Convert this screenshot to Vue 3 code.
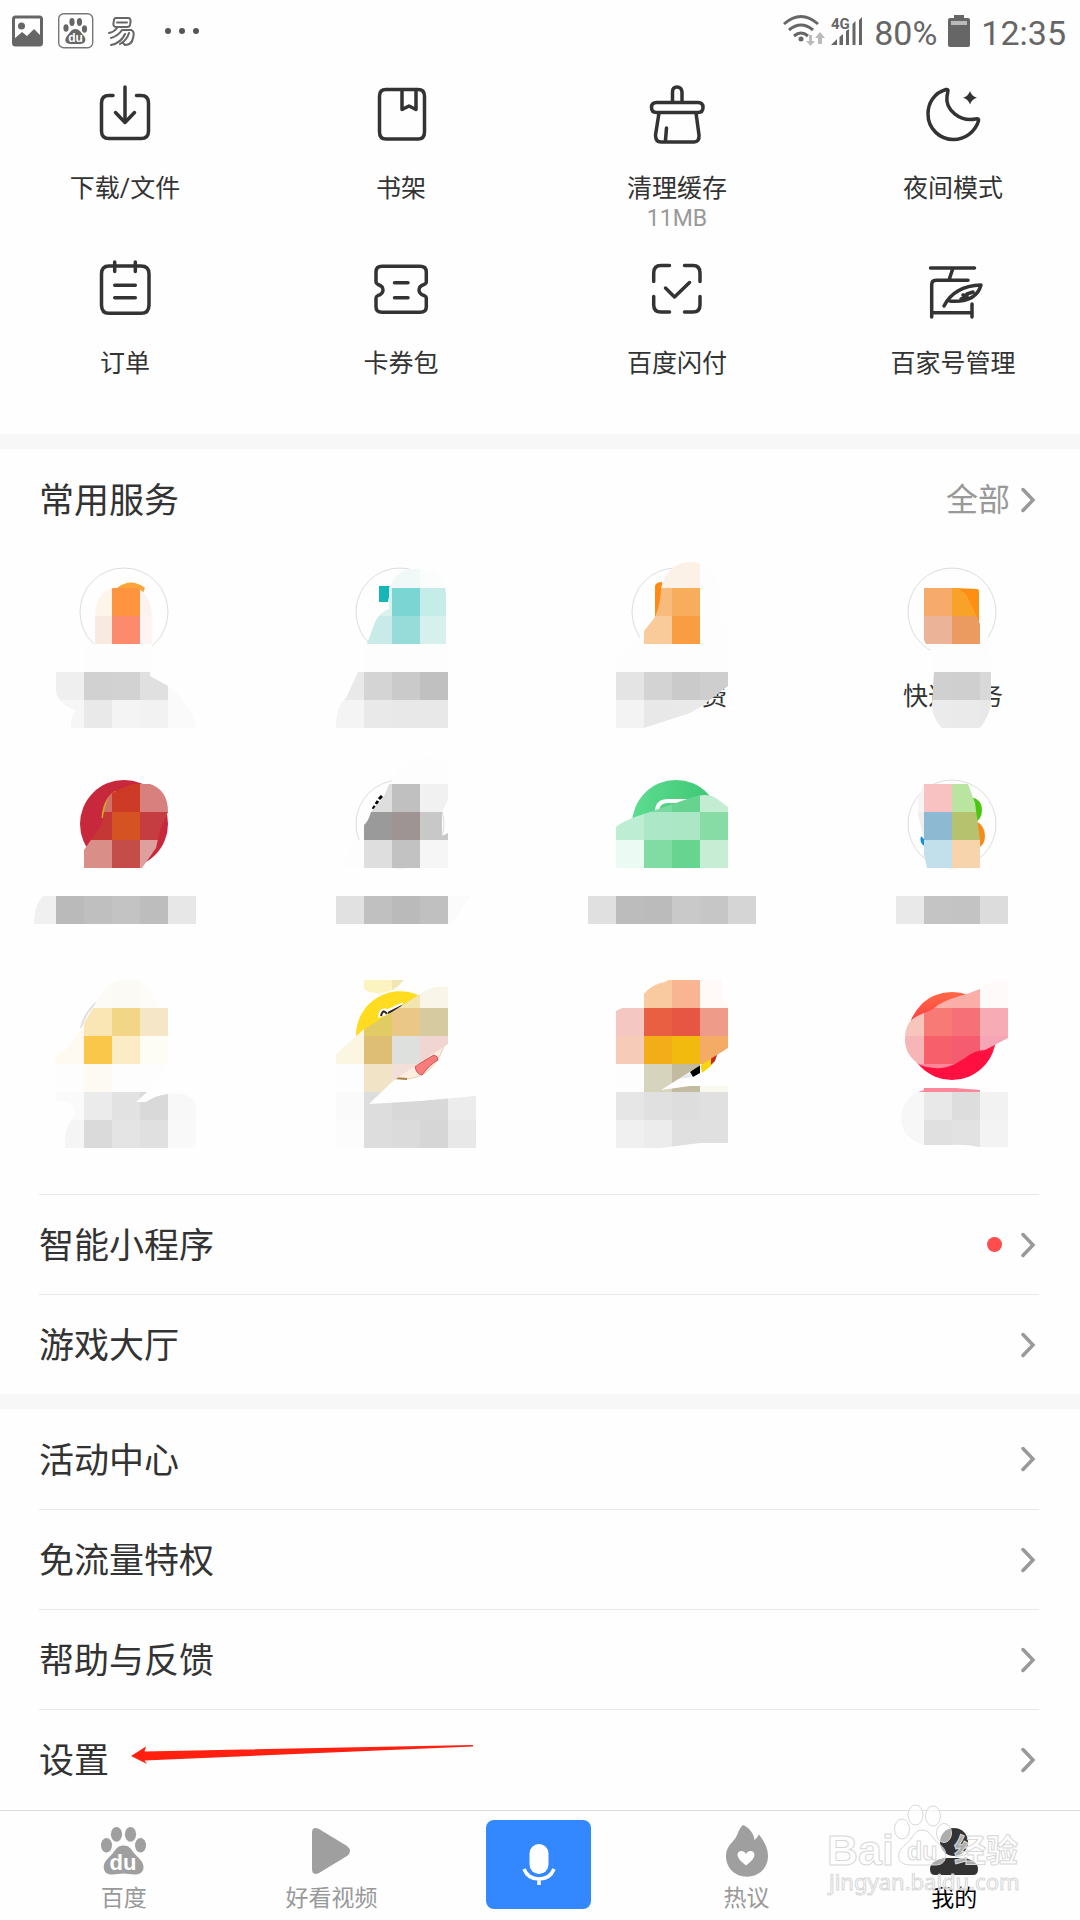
<template>
  <div class="page">
    <header class="status-bar">
      <div class="status-left">
        <svg width="32" height="32" viewBox="0 0 32 32">
          <rect x="1.500" y="2" width="28" height="28" rx="2" fill="none" stroke="#666" stroke-width="3" />
          <circle cx="9.500" cy="11" r="3.500" fill="#666" />
          <path d="M2 24L10 17L15 21L22 14L30 22V30H2Z" fill="#666" />
        </svg>
        <svg width="36" height="36" viewBox="0 0 36 36">
          <rect x="0.700" y="0.700" width="34" height="34" rx="5" fill="none" stroke="#777" stroke-width="1.400" />
          <g fill="#666">
            <ellipse cx="8" cy="15" rx="2.600" ry="3.800" />
            <ellipse cx="14" cy="9" rx="2.600" ry="4" />
            <ellipse cx="21.500" cy="9" rx="2.600" ry="4" />
            <ellipse cx="26.500" cy="16" rx="2.600" ry="3.800" />
            <path d="M17.500 16C22 16 23 20 26 23C29 27 27 31 22 31H13C7 31 6 27 9 23C12 20 13 16 17.500 16Z" />
          </g>
          <text x="17.500" y="29" class="du-text" font-size="12">du</text>
        </svg>
        <svg width="28" height="32" viewBox="0 0 28 32" class="line-icon status-line">
          <path d="M8 3H20Q23 3 22.500 7L22 10Q21.500 12 19 12H8Q5 12 5.500 8L6 5Q6.300 3 8 3ZM9 7.500H19M1 18Q6 17 9 13M3 23Q10 21 14 15H23Q27 16 25 23Q24 30 17 30L15 28M3 30Q13 28 17 19M12 29Q19 25 21 18" />
        </svg>
        <svg class="more" width="36" height="8" viewBox="0 0 36 8" fill="#555">
          <circle cx="4" cy="4" r="3" />
          <circle cx="18" cy="4" r="3" />
          <circle cx="32" cy="4" r="3" />
        </svg>
      </div>
      <div class="status-right">
        <div class="network">
          <svg width="44" height="34" viewBox="0 0 44 34">
            <g fill="none" stroke="#666" stroke-width="3">
              <path d="M1 10Q18 -5 35 10M6 16Q18 6 30 16M11 22Q18 16 25 22" />
            </g>
            <circle cx="18" cy="25" r="2.500" fill="#666" />
            <path d="M26 21H29V27H32L27.500 32L23 27H26ZM35 30V24H32L37 18L42 24H39V30Z" fill="#bbb" />
          </svg>
          <svg width="32" height="34" viewBox="0 0 32 34">
            <text x="0" y="15" class="net-text">4G</text>
            <path d="M0 31L6 25V31ZM8.500 31V23L12 20V31ZM15 31V17L18 15V31ZM21.500 31V10L24.500 7V31ZM28 31V6L31 3V31Z" fill="#666" />
          </svg>
        </div>
        <span class="status-text">80%</span>
        <svg width="22" height="32" viewBox="0 0 22 32">
          <path d="M6 0H16V3H20Q22 3 22 5V30Q22 32 20 32H2Q0 32 0 30V5Q0 3 2 3H6Z" fill="#666" />
          <rect x="3" y="6" width="16" height="4" fill="#bbb" />
        </svg>
        <span class="status-text">12:35</span>
      </div>
    </header>

    <main>
      <section class="tools">
        <button v-for="t in tools" :key="t.name" class="tool">
          <svg width="60" height="60" viewBox="0 0 60 60" class="line-icon">
            <path :d="t.icon" />
            <path v-if="t.solid" :d="t.solid" class="solid" />
          </svg>
          <span class="tool-name">{{ t.name }}</span>
          <span v-if="t.note" class="tool-note">{{ t.note }}</span>
        </button>
      </section>

      <section class="block services">
        <div class="block-head">
          <h2>常用服务</h2>
          <a href="#" class="all">
            全部
            <svg class="chevron" width="18" height="26" viewBox="0 0 18 26"><path d="M2 2.500L12 13L2 23.500" /></svg>
          </a>
        </div>
        <div class="service-grid">
          <button v-for="(s, i) in services" :key="i" class="service" :aria-label="'服务 ' + (i + 1)">
            <svg width="170" height="212" :viewBox="viewBox(i)">
              <defs>
                <clipPath :id="'mask' + i"><path :d="s.mask" /></clipPath>
                <linearGradient id="warm" x1="0" y1="0" x2="0" y2="1">
                  <stop offset="0" stop-color="#ff6a45" />
                  <stop offset="0.700" stop-color="#ff1040" />
                </linearGradient>
                <linearGradient id="mint" x1="0" y1="0" x2="1" y2="0">
                  <stop offset="0" stop-color="#5ddc90" />
                  <stop offset="1" stop-color="#3bc672" />
                </linearGradient>
              </defs>
              <circle
                v-if="!s.noRing"
                :cx="124 + 276 * (i % 4)"
                :cy="612 + 212 * Math.floor(i / 4)"
                r="44"
                :fill="s.bg || 'none'"
                :stroke="s.bg ? 'none' : '#ddd'"
              />
              <path v-for="(a, k) in s.art" :key="k" :d="a.d" :fill="a.fill || 'none'" :stroke="a.line || 'none'" :stroke-width="a.w || 1" />
              <text v-if="s.label" :x="s.labelX" :y="705" class="service-label">{{ s.label }}</text>
              <g :clip-path="'url(#mask' + i + ')'" shape-rendering="crispEdges">
                <template v-for="(row, r) in s.tiles" :key="r">
                  <rect
                    v-for="(c, k) in row[2].split(' ')"
                    :key="k"
                    :x="row[0] + k * 28"
                    :y="row[1]"
                    width="28"
                    height="28"
                    :fill="'#' + c"
                  />
                </template>
              </g>
            </svg>
          </button>
        </div>
        <nav class="list first-lined">
          <a href="#" class="row">
            <span class="row-name">智能小程序</span>
            <i class="dot"></i>
            <svg class="chevron" width="18" height="26" viewBox="0 0 18 26"><path d="M2 2.500L12 13L2 23.500" /></svg>
          </a>
          <a href="#" class="row">
            <span class="row-name">游戏大厅</span>
            <svg class="chevron" width="18" height="26" viewBox="0 0 18 26"><path d="M2 2.500L12 13L2 23.500" /></svg>
          </a>
        </nav>
      </section>

      <section class="block">
        <nav class="list">
          <a v-for="name in menus" :key="name" href="#" class="row">
            <span class="row-name">{{ name }}</span>
            <svg v-if="name === '设置'" class="pointer" width="344" height="30" viewBox="0 0 344 30">
              <path d="M0 11L15 1.500L13.500 6.500L342 0V1.500L13.500 15.500L16 19Z" fill="#ff2010" />
            </svg>
            <svg class="chevron" width="18" height="26" viewBox="0 0 18 26"><path d="M2 2.500L12 13L2 23.500" /></svg>
          </a>
        </nav>
      </section>
    </main>

    <footer class="tab-bar">
      <button class="tab">
        <svg width="56" height="56" viewBox="0 0 56 56" fill="#9f9f9f">
          <ellipse cx="10.500" cy="21.300" rx="5.500" ry="7.200" />
          <ellipse cx="20.500" cy="10.300" rx="5.600" ry="7.400" />
          <ellipse cx="34.500" cy="10.300" rx="5.600" ry="7.400" />
          <ellipse cx="44.500" cy="21.300" rx="5.500" ry="7.200" />
          <path d="M27.500 21.500C33 21.500 35 25 38 29C42 34 47.500 37 47.500 43C47.500 48 44 50.500 39 50.500C34 50.500 32 49.500 27.500 49.500C23 49.500 21 50.500 16 50.500C11 50.500 7.700 48 7.700 43C7.700 37 13 34 17 29C20 25 22 21.500 27.500 21.500Z" />
          <text x="27" y="46" class="du-text" font-size="22">du</text>
        </svg>
        <span>百度</span>
      </button>
      <button class="tab">
        <svg width="56" height="56" viewBox="0 0 56 56" fill="#9f9f9f">
          <path d="M9 9Q9 2 16 5L44 22Q50 27 44 32L16 49Q9 52 9 45Z" />
        </svg>
        <span>好看视频</span>
      </button>
      <button class="voice" aria-label="语音">
        <svg width="40" height="48" viewBox="0 0 40 48">
          <rect x="10.500" y="3" width="19" height="30" rx="9.500" fill="#fff" />
          <path d="M5 28Q9 38 20 38T35 28M20 38V44" fill="none" stroke="#fff" stroke-width="3.500" />
        </svg>
      </button>
      <button class="tab">
        <svg width="56" height="56" viewBox="0 0 56 56">
          <path d="M24 1C31 4 35 10 35.500 16Q38 14 40 10.500C44 16 49 23 49 32C49 44 40 52.700 28 52.700C16 52.700 7 44 7 32C7 23 13 19 16.500 14C19 10 20 4 24 1Z" fill="#9f9f9f" />
          <path d="M27 41.500Q18.500 35 18.500 31C18.500 26 25 26 27 30C29 26 35.500 26 35.500 31Q35.500 35 27 41.500Z" fill="#fff" />
        </svg>
        <span>热议</span>
      </button>
      <button class="tab active">
        <svg width="56" height="56" viewBox="0 0 56 56" fill="#333">
          <circle cx="28" cy="18" r="14" />
          <path d="M18 34H38Q52 37 52 45Q52 51 47 51H9Q4 51 4 45Q4 37 18 34Z" />
        </svg>
        <span>我的</span>
      </button>
      <svg class="watermark" width="200" height="96" viewBox="0 0 200 96">
        <g class="wm">
          <text x="1" y="63" class="wm-latin" font-size="43">Bai</text>
          <ellipse cx="76" cy="27" rx="7.500" ry="10" />
          <ellipse cx="89.500" cy="13" rx="7.500" ry="10" />
          <ellipse cx="107" cy="14" rx="7.500" ry="10" />
          <ellipse cx="118" cy="31" rx="7.500" ry="9.500" />
          <path d="M96 28C104 28 106 36 112 41C119 46 121 51 119 57C117 63 112 63 106 63H85C76 63 71 59 73 51C74 46 80 43 84 38C88 33 90 28 96 28Z" />
          <text x="81" y="58" class="wm-latin" font-size="25">du</text>
          <text x="128" y="60" class="wm-cjk" font-size="32">经验</text>
          <text x="3" y="88" class="wm-url" font-size="22">jingyan.baidu.com</text>
        </g>
      </svg>
    </footer>
  </div>
</template>

<script setup>
const tools = [
  {
    name: '下载/文件',
    icon: 'M18 11.500H14Q6.500 11.500 6.500 19V47Q6.500 54.500 14 54.500H46Q53.500 54.500 53.500 47V19Q53.500 11.500 46 11.500H41.500M30 3V38M20.500 28.500L30 38.500L39.500 28.500'
  },
  {
    name: '书架',
    icon: 'M15 5.500H47Q53.500 5.500 53.500 12V48Q53.500 55 47 55H15Q8.500 55 8.500 48V12Q8.500 5.500 15 5.500ZM31 6V25.500L38 22L45 25.500V6'
  },
  {
    name: '清理缓存',
    note: '11MB',
    icon: 'M25.500 18.500V8Q25.500 3 30 3T35 8V18.500M9.500 18.500H51Q56 18.500 56 23.500T51 28.500H9.500Q4.500 28.500 4.500 23.500T9.500 18.500ZM12 29L8.500 51Q8.500 58 14 58H47Q52.500 58 52 51L49 29M19.500 44L18.500 56'
  },
  {
    name: '夜间模式',
    icon: 'M23 5.500C11 9 5 19 5 30C5 45 17 55.500 30.500 55.500C42 55.500 52 48 55.500 37C56 35 55 34.500 52.500 35C37 38 22 26 24 12C25 7 26 5 23 5.500Z',
    solid: 'M47 7Q48.500 12 54 13.700Q48.500 15.500 47 20.500Q45.500 15.500 40 13.700Q45.500 12 47 7Z'
  },
  {
    name: '订单',
    icon: 'M14 7H46Q54 7 54 15V46Q54 54.300 46 54.300H14Q6.500 54.300 6.500 46V15Q6.500 7 14 7ZM19.700 3V12.500M40.300 3V12.500M19.700 26.300H40.300M19.700 38.700H40.300'
  },
  {
    name: '卡券包',
    icon: 'M11 7.300H49Q55.300 7.300 55.300 13V23Q55.300 24.500 53 25.500Q48 27 48 31T53 36.500Q55.300 37.500 55.300 39V48Q55.300 53.300 49 53.300H11Q5 53.300 5 48V39Q5 37.500 7 36.500Q12 35 12 31T7 25.500Q5 24.500 5 23V13Q5 7.300 11 7.300ZM23.500 23.700H37M23.500 38.700H37'
  },
  {
    name: '百度闪付',
    icon: 'M22.500 6.500H14Q6.700 6.500 6.700 14V22.500M37.500 6.500H46Q53 6.500 53 14V22.500M6.700 37.500V46Q6.700 53 14 53H22.500M53 37.500V46Q53 53 46 53H37.500M18.500 29L27.500 38L42.500 23.500'
  },
  {
    name: '百家号管理',
    icon: 'M7.500 9H51.500M30 9L26 21M45 21.300H13Q8.700 21.300 8.700 26V58M8.700 53.700H49V58M49 45V54M21 47Q31 27 58 26Q53 44 26.500 42M38 40L44 37L40 36M44 35L50 33'
  }
]

const menus = ['活动中心', '免流量特权', '帮助与反馈', '设置']

// tiles: [x, y, 每格颜色]
const services = [
  {
    art: [{ d: 'M117 588Q131 577 145 588L143 593L138 588Z', fill: '#fba43a' }],
    mask: 'M95 644V616Q96 592 113 588H138Q151 596 152 616V644L150 676L168 686Q178 692 183 702Q196 718 196 728H71Q71 715 76 711Q56 702 56 690V672H84V644Z',
    tiles: [
      [84, 588, 'fef5ea fe9440 fcf3f0'],
      [84, 616, 'f8eae1 fc8a6c fdf4f3'],
      [84, 644, 'fdfdfd fdfdfd fdfdfd'],
      [56, 672, 'efefef d1d1d1 d2d2d2 e0e0e0 fafafa'],
      [56, 700, 'f6f6f6 e9e9e9 f4f4f4 f2f2f2 fafafa']
    ]
  },
  {
    art: [{ d: 'M379 586H391L388 602H379Z', fill: '#16b6b8' }],
    mask: 'M364 652L375 622Q380 612 389 609V588Q396 570 412 569Q445 566 446 595V644H448V728H336Q336 706 346 698L358 672Z',
    tiles: [
      [364, 560, 'f0f9f8 f0f9f8 fbfdfd'],
      [364, 588, 'd9f2f0 7bd5d2 c6ece9'],
      [364, 616, 'c8ebe9 97dcd9 d8f0ed'],
      [364, 644, 'fdfdfd fdfdfd fdfdfd'],
      [336, 672, 'e9e9e9 d4d4d4 cacaca c0c0c0'],
      [336, 700, 'f4f4f4 e9e9e9 e8e8e8 e8e8e8']
    ]
  },
  {
    label: '费',
    labelX: 702,
    art: [{ d: 'M655 586Q656 582 662 582V617H655Z', fill: '#ff8a14' }],
    mask: 'M644 631L655 617Q661 603 661 588Q668 563 689 562Q720 563 721 600L722 627L728 630V686L702 706L690 713L644 728H616V660L640 638Z',
    tiles: [
      [644, 560, 'fcf1e6 fcf1e6 fdfdfd'],
      [644, 588, 'f9bb7b f8ad5c fdfdfd'],
      [616, 616, 'fdfdfd f9ca9a f89d41 fdfdfd'],
      [616, 644, 'fdfdfd fdfdfd fdfdfd fdfdfd'],
      [616, 672, 'e4e4e4 d3d3d3 cacaca cecece'],
      [616, 700, 'f3f3f3 e8e8e8 e9e9e9 e9e9e9']
    ]
  },
  {
    label: '快递服务',
    labelX: 903,
    art: [{ d: 'M955 588L977 589Q979 589 979 592V624Z', fill: '#ff8f14' }],
    mask: 'M924 588H958L966 594L980 624L988 638Q991 655 991 672V702Q990 715 980 728H942Q932 718 932 705L934 672Q933 650 926 644L924 640Z',
    tiles: [
      [924, 588, 'f6aa6b f9a229'],
      [924, 616, 'ebb397 eb9b60 fdfdfd'],
      [924, 644, 'fdfdfd fdfdfd fdfdfd'],
      [924, 672, 'd0d0d0 cfcfcf d8d8d8'],
      [924, 700, 'ebebeb eaeaea e8e8e8']
    ]
  },
  {
    bg: '#c8283c',
    art: [{ d: 'M103 818Q104 800 116 792', line: '#d9a520', w: 3 }],
    mask: 'M102 824Q105 800 112 793L132 784H150Q168 790 168 812L160 830L156 848L142 868H84V850ZM34 924Q34 905 43 896H196V924Z',
    tiles: [
      [84, 784, 'd07068 cd3b26 d7807e'],
      [84, 812, 'c53735 d55322 c53c41'],
      [84, 840, 'd98e88 c44c49 dea09c'],
      [28, 896, 'f0f0f0 bababa bfbfbf c3c3c3 bdbdbd e7e7e7']
    ]
  },
  {
    art: [{ d: 'M373 809L375 806M376 804L378 801M379 799L382 796', line: '#000', w: 3 }],
    mask: 'M364 825Q368 822 371 812L384 796L392 778Q405 757 425 757L448 760V800L442 812V836L448 833V868H340L358 836H364ZM336 896H470L452 924H336Z',
    tiles: [
      [392, 756, 'fdfdfd fdfdfd'],
      [364, 784, 'dedede c0c0c0 f1f1f1'],
      [364, 812, '9a9a9a 9e9494 c8c8c8'],
      [336, 840, 'fdfdfd dedede c2c2c2 f6f6f6'],
      [336, 896, 'e1e1e1 c0c0c0 bababa c0c0c0 fbfbfb']
    ]
  },
  {
    bg: 'url(#mint)',
    art: [{ d: 'M657 816V810Q658 801 668 801H692', line: '#fff', w: 4 }],
    mask: 'M616 868V827Q624 820 650 812L690 798Q706 792 716 798L728 807V868ZM588 896H756V924H588Z',
    tiles: [
      [616, 784, 'c0efd6 79d9a0 67d391 c3ecd2'],
      [616, 812, 'bdeed3 ace7c7 ace7c5 87dca5'],
      [616, 840, 'ebfaf3 81dca3 67d490 c7edd5'],
      [588, 896, 'e0e0e0 bcbcbc bbbbbb c9c9c9 c6c6c6 d5d5d5']
    ]
  },
  {
    art: [
      { d: 'M970 797Q982 799 982 810T972 823Z', fill: '#4ac80e' },
      { d: 'M976 821Q985 826 985 836T976 849Z', fill: '#f78a1b' },
      { d: 'M921 836Q919 842 924 846V839Z', fill: '#1990d6' }
    ],
    mask: 'M924 784H968L975 803L980 840V868H927L924 855V838L918 815V800ZM896 896H1008V924H896Z',
    tiles: [
      [896, 784, 'f6f4f4 f8c2c3 b9e5a0'],
      [896, 812, 'eeeeee 8eb9d2 b7c26f'],
      [924, 840, 'c2e0ec f7d4ac'],
      [896, 896, 'e9e9e9 c4c4c4 c3c3c3 dcdcdc']
    ]
  },
  {
    noRing: true,
    art: [{ d: 'M81 1028Q85 1012 98 1001', line: '#e0dce4', w: 2 }],
    mask: 'M56 1056L65 1050L81 1028L93 1008Q105 982 120 980H140Q152 990 160 1008H168V1064L147 1092L136 1102H146Q156 1095 168 1094Q190 1091 196 1104V1140Q194 1148 188 1148H65Q64 1125 75 1116L72 1104L56 1100Z',
    tiles: [
      [84, 980, 'fdfbf5 fcfaf4 fdfcf8'],
      [56, 1008, 'fefaf2 fae6b4 f2d688 f4e6c6'],
      [56, 1036, 'fefaf2 fbc74a fcecc6 fdfcf5'],
      [56, 1064, 'fdfdfd fcfaf3 fdfdfd fdfdfd'],
      [56, 1092, 'fafafa ebebeb e2e2e2 d9d9d9 f8f8f8'],
      [56, 1120, 'f5f5f5 dadada e4e4e4 e0e0e0 f9f9f9']
    ]
  },
  {
    noRing: true,
    art: [
      { d: 'M356 1036A44 44 0 0 1 420 996L380 1036Z', fill: '#ffdc20' },
      { d: 'M378 1018Q378 1006 388 1009L403 1002L400 1010Z', fill: '#fff' },
      { d: 'M381 1016Q383 1008 387 1014M388 1013L402 1006', line: '#322', w: 2 },
      { d: 'M393 1078Q430 1085 444 1046L420 1056Z', fill: '#fcefe2', line: '#f0cdb0' },
      { d: 'M415 1066L434 1055Q438 1056 438 1060Q430 1064 422 1075Q416 1074 415 1066Z', fill: '#f97b7b', line: '#c55' },
      { d: 'M394 1078L407 1079', line: '#a98448', w: 2 }
    ],
    mask: 'M336 1054L363 1030L392 1012L420 994Q435 984 448 987V1044L430 1056L393 1081L369 1104L420 1101L476 1096V1148H336ZM364 980H404Q392 995 376 993Q367 992 364 989Z',
    tiles: [
      [364, 980, 'fbf4c0 f2e6b0 f9f5e8'],
      [336, 1008, 'fbf6e2 e1cb64 eac786 d6cba0'],
      [336, 1036, 'fbf6e2 debe74 dde0dc f0d5d2'],
      [336, 1064, 'fdfdfd f1e3c6 f3dfd9'],
      [336, 1092, 'fafafa dddddd d8d8d8 d8d8d8 ececec'],
      [336, 1120, 'fcfcfc dddddd dbdbdb d6d6d6 e8e8e8']
    ]
  },
  {
    noRing: true,
    art: [
      { d: 'M710 1058L718 1052L715 1061L710 1066Z', fill: '#c9281c' },
      { d: 'M700 1062L711 1056V1066L702 1073Z', fill: '#fbd50c' },
      { d: 'M690 1072L700 1064V1073L693 1077Z', fill: '#000' },
      { d: 'M678 1079L690 1073L692 1077Z', fill: '#dfe9ee' }
    ],
    mask: 'M616 1011L622 1008H644V994Q652 984 665 982L668 980H722L723 1000L728 1003V1048L712 1058L661 1090L690 1086H728V1143H700L660 1148H616Z',
    tiles: [
      [644, 980, 'f9c9a0 f9b592 fff9f7'],
      [616, 1008, 'f4c7c2 e95f41 e65643 ee9b8a'],
      [616, 1036, 'f6cbb8 f2ad19 f2b90f f3ab66'],
      [616, 1064, 'fdfdfd d6d4bc c3bb9f f9f8ee'],
      [616, 1092, 'e6e6e6 e0e0e0 dddddd e0e0e0'],
      [616, 1120, 'f0f0f0 ececec e0e0e0 e0e0e0']
    ]
  },
  {
    bg: 'url(#warm)',
    art: [],
    mask: 'M905 1040C905 1022 912 1018 924 1013Q933 1010 938 1005Q950 998 967 994L980 989L993 981L1008 980V1038L985 1050Q975 1050 965 1058L955 1064Q938 1072 920 1065Q905 1055 905 1040ZM924 1088H955L980 1090V1092H1008V1147H980Q965 1144 950 1145H924Q901 1138 901 1117Q903 1096 924 1090Z',
    tiles: [
      [924, 980, 'fbb0a8 fbada7 fffafa'],
      [896, 1008, 'f6c6bc f77a77 f67177 f7abb5'],
      [896, 1036, 'f6b6b8 f75f6a f55c6f f6a5b7'],
      [896, 1064, 'fb8798 fb8798 fb8798'],
      [896, 1092, 'f7f7f7 e8e8e8 dddddd f2f2f2'],
      [896, 1120, 'f7f7f7 e0e0e0 e2e2e2 f3f3f3']
    ]
  }
]

function viewBox(i) {
  return `${40 + 276 * (i % 4)} ${551 + 212 * Math.floor(i / 4)} 170 212`
}
</script>

<style>
body {
  background: #fefefe;
}
</style>

<style scoped>
.page {
  min-height: 100vh;
  display: flex;
  flex-direction: column;
  background: #fefefe;
  color: #333;
  font-family: Roboto, "Noto Sans CJK SC", sans-serif;
}
button {
  border: 0;
  padding: 0;
  background: none;
  color: inherit;
  font-family: inherit;
  cursor: pointer;
}
a {
  color: inherit;
  text-decoration: none;
}
svg {
  display: block;
  flex: none;
}
.status-bar {
  height: 62px;
  padding: 0 14px 0 12px;
  display: flex;
  align-items: center;
  justify-content: space-between;
}
.status-left,
.status-right,
.network {
  display: flex;
  align-items: center;
}
.status-left {
  gap: 14px;
}
.status-right {
  gap: 11px;
}
.network {
  gap: 4px;
}
.more {
  margin-left: 14px;
}
.status-text {
  color: #666;
  font-size: 34px;
  line-height: 40px;
  padding-top: 4px;
}
.net-text {
  font-size: 15px;
  font-weight: 700;
  fill: #666;
}
.du-text {
  font-family: "Liberation Sans", sans-serif;
  font-weight: 700;
  text-anchor: middle;
  fill: #fff;
}
.line-icon {
  fill: none;
  stroke: #333;
  stroke-width: 3.5;
  stroke-linecap: round;
  stroke-linejoin: round;
}
.status-line {
  stroke: #666;
  stroke-width: 2;
}
.solid {
  fill: #333;
  stroke: none;
}
.tools,
.service-grid {
  display: grid;
  grid-template-columns: repeat(4, 170px);
  justify-content: space-between;
}
.tools {
  padding: 22px 42px 55px 40px;
  row-gap: 25px;
}
.tool {
  display: flex;
  flex-direction: column;
  align-items: center;
}
.tool-name {
  margin-top: 30px;
  font-size: 25px;
  line-height: 30px;
  white-space: nowrap;
}
.tool-note {
  font-size: 23px;
  line-height: 30px;
  color: #999;
}
.block {
  border-top: 15px solid #f7f7f7;
}
.block-head {
  height: 102px;
  padding: 0 41px 0 39px;
  display: flex;
  align-items: center;
  justify-content: space-between;
}
.block-head h2 {
  margin: 0;
  padding-top: 4px;
  font-size: 35px;
  line-height: 44px;
  font-weight: 400;
}
.all {
  display: flex;
  align-items: center;
  gap: 11px;
  font-size: 32px;
  line-height: 44px;
  color: #999;
}
.chevron {
  fill: none;
  stroke: #999;
  stroke-width: 3.5;
  stroke-linecap: round;
}
.service-grid {
  padding: 0 42px 7px 40px;
}
.service svg {
  overflow: visible;
}
.service-label {
  font-size: 25px;
  fill: #333;
}
.list {
  padding: 0 41px 0 39px;
}
.row {
  box-sizing: border-box;
  height: 100px;
  display: flex;
  align-items: center;
  font-size: 35px;
  line-height: 44px;
}
.row + .row,
.first-lined .row {
  border-top: 1px solid #e8e8e8;
}
.row-name {
  padding-top: 5px;
}
.row .chevron {
  margin-left: auto;
}
.dot {
  width: 15px;
  height: 15px;
  margin-left: auto;
  border-radius: 50%;
  background: #ff4c4c;
}
.row .dot + .chevron {
  margin-left: 19px;
}
.pointer {
  margin-left: 22px;
}
.tab-bar {
  position: relative;
  box-sizing: border-box;
  height: 110px;
  margin-top: auto;
  padding: 9px 22px 0 20px;
  border-top: 1px solid #ddd;
  display: grid;
  grid-template-columns: repeat(5, 1fr);
  justify-items: center;
  align-items: start;
}
.tab {
  padding-top: 4px;
  display: flex;
  flex-direction: column;
  align-items: center;
  gap: 4px;
  font-size: 23px;
  line-height: 30px;
  color: #999;
}
.tab.active {
  color: #000;
}
.voice {
  width: 105px;
  height: 89px;
  border-radius: 8px;
  background: #3388ff;
  display: flex;
  align-items: center;
  justify-content: center;
}
.watermark {
  position: absolute;
  right: 54px;
  bottom: 22px;
  overflow: visible;
  pointer-events: none;
}
.wm {
  fill: rgba(255, 255, 255, 0.6);
  stroke: #d8d8d8;
  stroke-width: 1;
}
.wm-latin {
  font-family: "Liberation Sans", sans-serif;
  font-weight: 700;
}
.wm-cjk {
  font-weight: 700;
}
.wm-url {
  font-family: "Noto Sans", sans-serif;
}
</style>
